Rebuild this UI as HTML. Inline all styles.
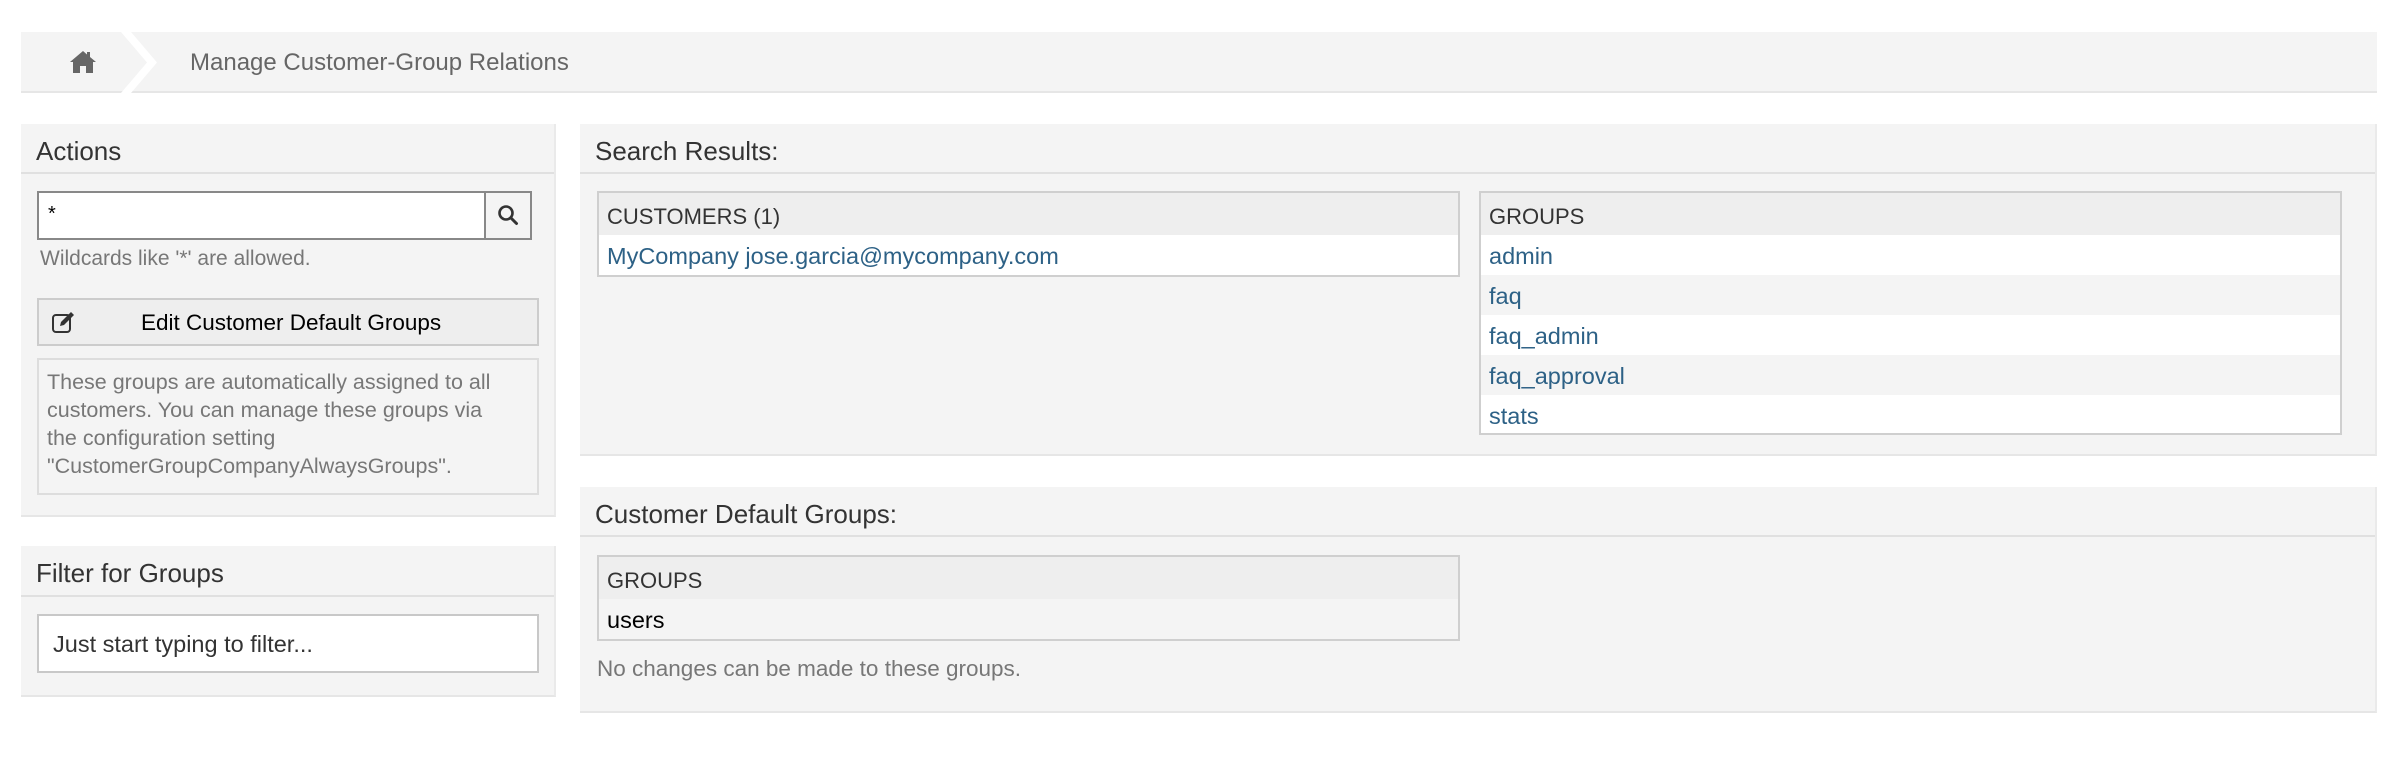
<!DOCTYPE html>
<html><head><meta charset="utf-8"><style>
*{box-sizing:border-box;margin:0;padding:0}
body{width:2400px;height:758px;background:#fff;font-family:"Liberation Sans",Arial,sans-serif;color:#333;position:relative;overflow:hidden}
.abs{position:absolute}
.crumb{left:21px;top:32px;width:2356px;height:61px;background:#f4f4f4;border-bottom:2px solid #e6e6e6}
.crumb .t{position:absolute;left:169px;top:17px;font-size:24px;color:#666}
.box{background:#f4f4f4;border-right:2px solid #eaeaea;border-bottom:2px solid #e6e6e6}
.hd{position:absolute;left:0;right:0;top:0;height:50px;border-bottom:2px solid #e0e0e0;font-size:26px;padding:12px 0 0 15px;color:#333}
.tbl{background:#fff;border:2px solid #cfcfcf}
.tbl .th{height:42px;background:#eee;font-size:22px;padding:11px 0 0 8px;color:#333}
.tbl .r{height:40px;font-size:23.5px;padding:8px 0 0 8px;color:#2d6186}
.tbl .r.alt{background:#f4f4f4}
</style></head><body>
<div class="abs crumb">
 <svg class="abs" style="left:48px;top:18px" width="28" height="24" viewBox="0 0 28 24"><path d="M14 1 L1 12 L4 12 L4 23 L11 23 L11 16 L17 16 L17 23 L24 23 L24 12 L27 12 L21 7 L21 2 L18 2 L18 4.5 Z" fill="#666"/></svg>
 <svg class="abs" style="left:100px;top:0" width="60" height="61" viewBox="0 0 60 61"><path d="M0 0 L10 0 L36 30.5 L10 61 L0 61 L26 30.5 Z" fill="#fff"/></svg>
 <div class="t">Manage Customer-Group Relations</div>
</div>

<div class="abs box" style="left:21px;top:124px;width:535px;height:393px">
 <div class="hd">Actions</div>
 <div class="abs" style="left:16px;top:67px;width:495px;height:49px;background:#fff;border:2px solid #888"></div>
 <div class="abs" style="left:27px;top:79px;font-size:20px;color:#000">*</div>
 <div class="abs" style="left:463px;top:67px;width:48px;height:49px;border:2px solid #888;background:#f4f4f4"></div>
 <svg class="abs" style="left:476px;top:80px" width="22" height="22" viewBox="0 0 22 22"><circle cx="9" cy="9" r="6.5" fill="none" stroke="#333" stroke-width="2.6"/><path d="M14 14 L19.5 19.5" stroke="#333" stroke-width="3" stroke-linecap="round"/></svg>
 <div class="abs" style="left:19px;top:123px;font-size:21px;color:#777">Wildcards like '*' are allowed.</div>
 <div class="abs" style="left:16px;top:174px;width:502px;height:48px;background:#eee;border:2px solid #ccc"></div>
 <svg class="abs" style="left:30px;top:187px" width="26" height="24" viewBox="0 0 26 24"><rect x="2" y="4" width="17" height="17" rx="3" fill="none" stroke="#333" stroke-width="2"/><path d="M9 15 L10 11 L20 1 L23 4 L13 14 Z" fill="#333"/></svg>
 <div class="abs" style="left:120px;top:186px;font-size:22.5px;color:#000">Edit Customer Default Groups</div>
 <div class="abs" style="left:16px;top:234px;width:502px;height:137px;border:2px solid #ddd;padding:8px 8px;font-size:21.5px;line-height:28px;color:#777">These groups are automatically assigned to all<br>customers. You can manage these groups via<br>the configuration setting<br>"CustomerGroupCompanyAlwaysGroups".</div>
</div>

<div class="abs box" style="left:21px;top:546px;width:535px;height:151px">
 <div class="hd" style="height:51px">Filter for Groups</div>
 <div class="abs" style="left:16px;top:68px;width:502px;height:59px;background:#fff;border:2px solid #c8c8c8;font-size:23.5px;padding:15px 14px;color:#333">Just start typing to filter...</div>
</div>

<div class="abs box" style="left:580px;top:124px;width:1797px;height:332px">
 <div class="hd">Search Results:</div>
 <div class="abs tbl" style="left:17px;top:67px;width:863px;height:86px">
  <div class="th">CUSTOMERS (1)</div>
  <div class="r">MyCompany jose.garcia@mycompany.com</div>
 </div>
 <div class="abs tbl" style="left:899px;top:67px;width:863px;height:244px">
  <div class="th">GROUPS</div>
  <div class="r">admin</div>
  <div class="r alt">faq</div>
  <div class="r">faq_admin</div>
  <div class="r alt">faq_approval</div>
  <div class="r">stats</div>
 </div>
</div>

<div class="abs box" style="left:580px;top:487px;width:1797px;height:226px">
 <div class="hd">Customer Default Groups:</div>
 <div class="abs tbl" style="left:17px;top:68px;width:863px;height:86px">
  <div class="th">GROUPS</div>
  <div class="r alt" style="color:#000">users</div>
 </div>
 <div class="abs" style="left:17px;top:169px;font-size:22.5px;color:#777">No changes can be made to these groups.</div>
</div>
</body></html>
